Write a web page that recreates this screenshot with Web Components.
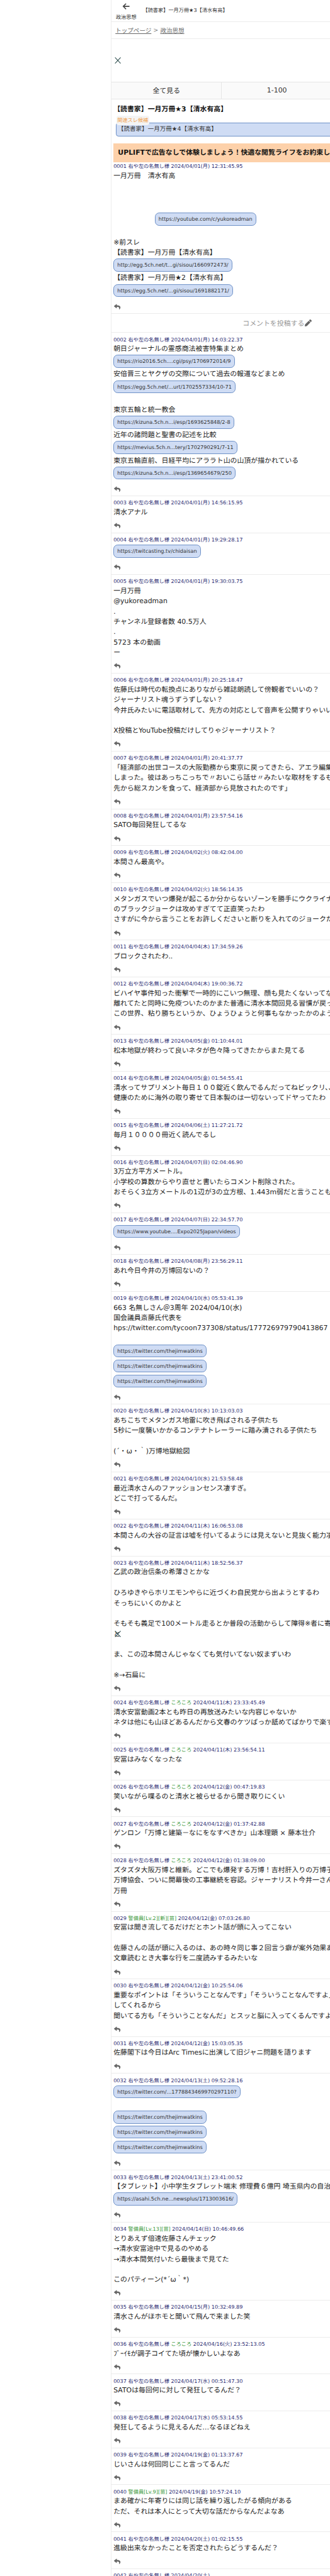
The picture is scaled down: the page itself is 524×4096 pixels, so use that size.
<!DOCTYPE html>
<html lang="ja">
<head>
<meta charset="utf-8">
<title>【読書家】一月万冊★3【清水有高】</title>
<style>
html,body{margin:0;padding:0;background:#fff;height:100%;overflow:hidden}
body{font-family:"DejaVu Sans","Noto Sans CJK JP",sans-serif;color:#222;text-rendering:geometricPrecision}
</style>
</head>
<body>
<bbs-app>
<site-header section="政治思想" title="【読書家】一月万冊★3【清水有高】"></site-header>
<bread-crumb></bread-crumb>
<ad-slot></ad-slot>
<page-tabs></page-tabs>
<thread-head title="【読書家】一月万冊★3【清水有高】" related="【読書家】一月万冊★4【清水有高】" banner="UPLIFTで広告なしで体験しましょう！快適な閲覧ライフをお約束します"></thread-head>

<bbs-comment first no="0001" date="2024/04/01(月) 12:31:45.95">
<c-line>一月万冊　清水有高</c-line><c-line></c-line><c-line></c-line><c-line></c-line>
<c-link offset>https://youtube.com/c/yukoreadman</c-link>
<c-line></c-line>
<c-line>※前スレ</c-line>
<c-line>【読書家】一月万冊【清水有高】</c-line>
<c-link>http://egg.5ch.net/t...gi/sisou/1660972473/</c-link>
<c-line>【読書家】一月万冊★2【清水有高】</c-line>
<c-link>https://egg.5ch.net/...gi/sisou/1691882171/</c-link>
</bbs-comment>
<post-row></post-row>

<bbs-comment no="0002" date="2024/04/01(月) 14:03:22.37">
<c-line>朝日ジャーナルの霊感商法被害特集まとめ</c-line>
<c-link>https://rio2016.5ch....cgi/psy/1706972014/9</c-link>
<c-line>安倍晋三とヤクザの交際について過去の報道などまとめ</c-line>
<c-link>https://egg.5ch.net/...urt/1702557334/10-71</c-link>
<c-line></c-line>
<c-line>東京五輪と統一教会</c-line>
<c-link>https://kizuna.5ch.n...i/esp/1693625848/2-8</c-link>
<c-line>近年の諸問題と聖書の記述を比較</c-line>
<c-link>https://mevius.5ch.n...tery/1702790291/7-11</c-link>
<c-line>東京五輪直前、日経平均にアララト山の山頂が描かれている</c-line>
<c-link>https://kizuna.5ch.n...i/esp/1369654679/250</c-link>
</bbs-comment>

<bbs-comment no="0003" date="2024/04/01(月) 14:56:15.95"><c-line>清水アナル</c-line></bbs-comment>
<bbs-comment no="0004" date="2024/04/01(月) 19:29:28.17"><c-link>https://twitcasting.tv/chidaisan</c-link></bbs-comment>
<bbs-comment no="0005" date="2024/04/01(月) 19:30:03.75">
<c-line>一月万冊</c-line><c-line>@yukoreadman</c-line><c-line>.</c-line><c-line>チャンネル登録者数 40.5万人</c-line><c-line>.</c-line><c-line>5723 本の動画</c-line><c-line>ー</c-line>
</bbs-comment>
<bbs-comment no="0006" date="2024/04/01(月) 20:25:18.47">
<c-line>佐藤氏は時代の転換点にありながら雑誌朗読して傍観者でいいの？</c-line>
<c-line>ジャーナリスト魂うずうずしない？</c-line>
<c-line>今井氏みたいに電話取材して、先方の対応として音声を公開すりゃいい</c-line>
<c-line></c-line>
<c-line>X投稿とYouTube投稿だけしてりゃジャーナリスト？</c-line>
</bbs-comment>
<bbs-comment no="0007" date="2024/04/01(月) 20:41:37.77">
<c-line>「経済部の出世コースの大阪勤務から東京に戻ってきたら、アエラ編集</c-line>
<c-line>しまった。彼はあっちこっちで〃おいこら話せ〃みたいな取材をするも</c-line>
<c-line>先から総スカンを食って、経済部から見放されたのです」</c-line>
</bbs-comment>
<bbs-comment no="0008" date="2024/04/01(月) 23:57:54.16"><c-line>SATO毎回発狂してるな</c-line></bbs-comment>
<bbs-comment no="0009" date="2024/04/02(火) 08:42:04.00"><c-line>本間さん最高や。</c-line></bbs-comment>
<bbs-comment no="0010" date="2024/04/02(火) 18:56:14.35">
<c-line>メタンガスでいつ爆発が起こるか分からないゾーンを勝手にウクライナ</c-line>
<c-line>のブラックジョークは攻めすぎてて正直笑ったわ</c-line>
<c-line>さすがに今から言うことをお許しくださいと断りを入れてのジョークだ</c-line>
</bbs-comment>
<bbs-comment no="0011" date="2024/04/04(木) 17:34:59.26"><c-line>ブロックされたわ..</c-line></bbs-comment>
<bbs-comment no="0012" date="2024/04/04(木) 19:00:36.72">
<c-line>ビハイヤ事件知った衝撃で一時的にこいつ無理、顔も見たくないってな</c-line>
<c-line>離れてたと同時に免疫ついたのかまた普通に清水本間回見る習慣が戻っ</c-line>
<c-line>この世界、粘り勝ちというか、ひょうひょうと何事もなかったかのよう</c-line>
</bbs-comment>
<bbs-comment no="0013" date="2024/04/05(金) 01:10:44.01"><c-line>松本地獄が終わって良いネタが色々降ってきたからまた見てる</c-line></bbs-comment>
<bbs-comment no="0014" date="2024/04/05(金) 01:54:55.41">
<c-line>清水ってサプリメント毎日１００錠近く飲んでるんだってねビックリ、、</c-line>
<c-line>健康のために海外の取り寄せて日本製のは一切ないってドヤってたわ</c-line>
</bbs-comment>
<bbs-comment no="0015" date="2024/04/06(土) 11:27:21.72"><c-line>毎月１００００冊近く読んでるし</c-line></bbs-comment>
<bbs-comment no="0016" date="2024/04/07(日) 02:04:46.90">
<c-line>3万立方平方メートル。</c-line>
<c-line>小学校の算数からやり直せと書いたらコメント削除された。</c-line>
<c-line>おそらく3立方メートルの1辺が3の立方根、1.443m弱だと言うことも</c-line>
</bbs-comment>
<bbs-comment no="0017" date="2024/04/07(日) 22:34:57.70"><c-link>https://www.youtube....Expo2025Japan/videos</c-link></bbs-comment>
<bbs-comment no="0018" date="2024/04/08(月) 23:56:29.11"><c-line>あれ今日今井の万博回ないの？</c-line></bbs-comment>
<bbs-comment no="0019" date="2024/04/10(水) 05:53:41.39">
<c-line>663 名無しさん＠3周年 2024/04/10(水)</c-line>
<c-line>国会議員斎藤氏代表を</c-line>
<c-line>hps://twitter.com/tycoon737308/status/177726979790413867</c-line>
<c-line></c-line>
<c-link>https://twitter.com/thejimwatkins</c-link>
<c-link>https://twitter.com/thejimwatkins</c-link>
<c-link>https://twitter.com/thejimwatkins</c-link>
</bbs-comment>
<bbs-comment no="0020" date="2024/04/10(水) 10:13:03.03">
<c-line>あちこちでメタンガス地雷に吹き飛ばされる子供たち</c-line>
<c-line>5秒に一度襲いかかるコンテナトレーラーに踏み潰される子供たち</c-line>
<c-line></c-line>
<c-line>(´・ω・｀)万博地獄絵図</c-line>
</bbs-comment>
<bbs-comment no="0021" date="2024/04/10(水) 21:53:58.48">
<c-line>最近清水さんのファッションセンス凄すぎ。</c-line>
<c-line>どこで打ってるんだ。</c-line>
</bbs-comment>
<bbs-comment no="0022" date="2024/04/11(木) 16:06:53.08"><c-line>本間さんの大谷の証言は嘘を付いてるようには見えないと見抜く能力凄</c-line></bbs-comment>
<bbs-comment no="0023" date="2024/04/11(木) 18:52:56.37">
<c-line>乙武の政治信条の希薄さとかな</c-line>
<c-line></c-line>
<c-line>ひろゆきやらホリエモンやらに近づくわ自民党から出ようとするわ</c-line>
<c-line>そっちにいくのかよと</c-line>
<c-line></c-line>
<c-line>そもそも義足で100メートル走るとか普段の活動からして障得※者に寄</c-line>
<c-line><close-x over></close-x>と</c-line>
<c-line></c-line>
<c-line>ま、この辺本間さんじゃなくても気付いてない奴まずいわ</c-line>
<c-line></c-line>
<c-line>※→石扁に</c-line>
</bbs-comment>
<bbs-comment no="0024" nick="ころころ" date="2024/04/11(木) 23:33:45.49">
<c-line>清水安富動画2本とも昨日の再放送みたいな内容じゃないか</c-line>
<c-line>ネタは他にも山ほどあるんだから文春のケツばっか舐めてばかりで楽す</c-line>
</bbs-comment>
<bbs-comment no="0025" nick="ころころ" date="2024/04/11(木) 23:56:54.11"><c-line>安冨はみなくなったな</c-line></bbs-comment>
<bbs-comment no="0026" nick="ころころ" date="2024/04/12(金) 00:47:19.83"><c-line>笑いながら喋るのと清水と被らせるから聞き取りにくい</c-line></bbs-comment>
<bbs-comment no="0027" nick="ころころ" date="2024/04/12(金) 01:37:42.88"><c-line>ゲンロン「万博と建築－なにをなすべきか」山本理顕 × 藤本壮介</c-line></bbs-comment>
<bbs-comment no="0028" nick="ころころ" date="2024/04/12(金) 01:38:09.00">
<c-line>ズタズタ大阪万博と維新。どこでも爆発する万博！吉村肝入りの万博子</c-line>
<c-line>万博協会、ついに開幕後の工事継続を容認。ジャーナリスト今井一さん</c-line>
<c-line>万冊</c-line>
</bbs-comment>
<bbs-comment no="0029" guard="警備員[Lv.2][新][苗]" date="2024/04/12(金) 07:03:26.80">
<c-line>安冨は聞き流してるだけだとホント話が頭に入ってこない</c-line>
<c-line></c-line>
<c-line>佐藤さんの話が頭に入るのは、あの時々同じ事２回言う癖が案外効果あ</c-line>
<c-line>文章読むとき大事な行を二度読みするみたいな</c-line>
</bbs-comment>
<bbs-comment no="0030" date="2024/04/12(金) 10:25:54.06">
<c-line>重要なポイントは「そういうことなんです」「そういうことなんですよ」</c-line>
<c-line>してくれるから</c-line>
<c-line>聞いてる方も「そういうことなんだ」とスッと脳に入ってくるんですよ</c-line>
</bbs-comment>
<bbs-comment no="0031" date="2024/04/12(金) 15:03:05.35"><c-line>佐藤閣下は今日はArc Timesに出演して旧ジャニ問題を語ります</c-line></bbs-comment>
<bbs-comment no="0032" date="2024/04/13(土) 09:52:28.16">
<c-link>https://twitter.com/...1778843469970297110?</c-link>
<c-line></c-line>
<c-link>https://twitter.com/thejimwatkins</c-link>
<c-link>https://twitter.com/thejimwatkins</c-link>
<c-link>https://twitter.com/thejimwatkins</c-link>
</bbs-comment>
<bbs-comment no="0033" date="2024/04/13(土) 23:41:00.52">
<c-line>【タブレット】小中学生タブレット端末 修理費６億円 埼玉県内の自治</c-line>
<c-link>https://asahi.5ch.ne...newsplus/1713003616/</c-link>
</bbs-comment>
<bbs-comment no="0034" guard="警備員[Lv.13][苗]" date="2024/04/14(日) 10:46:49.66">
<c-line>とりあえず倍速佐藤さんチェック</c-line>
<c-line>→清水安富途中で見るのやめる</c-line>
<c-line>→清水本間気付いたら最後まで見てた</c-line>
<c-line></c-line>
<c-line>このパティーン(*´ω｀*)</c-line>
</bbs-comment>
<bbs-comment no="0035" date="2024/04/15(月) 10:32:49.89"><c-line>清水さんがほホモと聞いて飛んで来ました笑</c-line></bbs-comment>
<bbs-comment no="0036" nick="ころころ" date="2024/04/16(火) 23:52:13.05"><c-line>ﾌﾞｰｲﾓが調子コイてた頃が懐かしいよなあ</c-line></bbs-comment>
<bbs-comment no="0037" date="2024/04/17(水) 00:51:47.30"><c-line>SATOは毎回何に対して発狂してるんだ？</c-line></bbs-comment>
<bbs-comment no="0038" date="2024/04/17(水) 05:53:14.55"><c-line>発狂してるように見えるんだ…なるほどねえ</c-line></bbs-comment>
<bbs-comment no="0039" date="2024/04/19(金) 01:13:37.67"><c-line>じいさんは何回同じこと言ってるんだ</c-line></bbs-comment>
<bbs-comment no="0040" guard="警備員[Lv.9][苗]" date="2024/04/19(金) 10:57:24.10">
<c-line>まあ確かに年寄りには同じ話を繰り返したがる傾向がある</c-line>
<c-line>ただ、それは本人にとって大切な話だからなんだよなあ</c-line>
</bbs-comment>
<bbs-comment no="0041" date="2024/04/20(土) 01:02:15.55"><c-line>進級出来なかったことを否定されたらどうするんだ？</c-line></bbs-comment>
<bbs-comment no="0042" date="2024/04/20(土)"></bbs-comment>
</bbs-app>

<script>
const S = 0.6825;
const u = n => (n * S).toFixed(3) + 'px';
const NAVY = '#2a2a72', GREEN = '#3d9a3d', RULE = '#ececec';

const ICONS = {
  reply: 'M8.309 189.836L184.313 37.851C199.719 24.546 224 35.347 224 56.015v80.053c160.629 1.839 288 34.032 288 186.258 0 61.441-39.581 122.309-83.333 154.132-13.653 9.931-33.111-2.533-28.077-18.631 45.344-145.012-21.507-183.51-176.59-185.742V360c0 20.7-24.3 31.453-39.687 18.164l-176.004-152c-11.071-9.562-11.086-26.753 0-36.328z',
  pen: 'M497.9 142.1l-46.1 46.1c-4.7 4.7-12.3 4.7-17 0l-111-111c-4.7-4.7-4.7-12.3 0-17l46.1-46.1c18.7-18.7 49.1-18.7 67.9 0l60.1 60.1c18.8 18.7 18.8 49.1 0 67.9zM284.2 99.8L21.6 362.4.4 483.9c-2.9 16.4 11.4 30.6 27.8 27.8l121.5-21.3 262.6-262.6c4.7-4.7 4.7-12.3 0-17l-111-111c-4.8-4.7-12.4-4.7-17.1 0z'
};

function define(tag, html) {
  customElements.define(tag, class extends HTMLElement {
    connectedCallback() {
      if (this.shadowRoot) return;
      const root = this.attachShadow({ mode: 'open' });
      root.innerHTML = typeof html === 'function' ? html(this) : html;
    }
  });
}

define('bbs-app', `<style>
:host{display:block;width:100%;height:100vh;overflow:hidden}
main{display:block;margin-left:${u(258)};width:${u(768)};min-height:100%;border-left:1px solid ${RULE};box-sizing:border-box}
</style><main><slot></slot></main>`);

define('site-header', h => `<style>
:host{display:flex;height:${u(50)};border-bottom:1px solid ${RULE};box-sizing:content-box;color:#333}
.back{display:flex;flex-direction:column;align-items:center;margin-left:${u(10)};width:${u(48)}}
svg{display:block;margin-top:${u(7)};width:${u(18)};height:${u(15)}}
.sec{font-size:${u(12)};line-height:${u(18)};margin-top:${u(9)};white-space:nowrap}
.title{font-size:${u(12)};line-height:${u(18)};margin-left:${u(14.5)};margin-top:${u(15)};white-space:nowrap}
</style>
<div class="back"><svg viewBox="0 0 18 15"><path d="M17 7.5H2.5M9 1L2.5 7.5L9 14" fill="none" stroke="#444" stroke-width="2.3"/></svg><span class="sec">${h.getAttribute('section')}</span></div>
<div class="title">${h.getAttribute('title')}</div>`);

define('bread-crumb', `<style>
:host{display:flex;align-items:center;height:${u(38)};padding-left:${u(9)};border-bottom:1px solid ${RULE};font-size:${u(14)};color:#777;white-space:pre}
a{color:#666;text-decoration:underline}
</style><a>トップページ</a><span> &gt; </span><a>政治思想</a>`);

define('close-x', `<style>
:host{display:block;width:${u(15)};height:${u(15)}}
:host([over]){position:absolute;left:${u(3)};top:${u(3)}}
svg{display:block;width:100%;height:100%}
</style><svg viewBox="0 0 15 15"><path d="M1 .5L14 14.5M14 .5L1 14.5" stroke="#2f4f4f" stroke-width="1.5" fill="none"/></svg>`);

define('ad-slot', `<style>
:host{display:flex;align-items:center;height:${u(99)};padding-left:${u(7)};box-sizing:border-box}
</style><close-x></close-x>`);

define('page-tabs', `<style>
:host{display:grid;grid-template-columns:repeat(3,${u(257)});height:${u(38)};background:#fafafa;border-top:1px solid #e6e6e6;border-bottom:1px solid #e6e6e6;font-size:${u(16)};color:#333}
span{display:flex;align-items:center;justify-content:center;border-right:1px solid #e6e6e6}
</style><span>全て見る</span><span>1-100</span><span></span>`);

define('thread-head', h => `<style>
:host{display:block;padding-top:${u(12.5)}}
h1{margin:0 0 0 ${u(4.5)};font-size:${u(16)};line-height:${u(24)};font-weight:700;color:#111;white-space:nowrap}
.rel{position:relative;margin:${u(18.5)} 0 0 ${u(10)};width:${u(758)};height:${u(32)};box-sizing:border-box;background:#cfdcf4;border:1px solid #6f92c8;border-radius:${u(6)};font-size:${u(14)};line-height:${u(30)};padding-left:${u(3)};color:#333;white-space:nowrap}
.tag{position:absolute;left:0;top:${u(-17)};padding:0 ${u(2)};background:#f4f4f4;border-radius:${u(5)};font-size:${u(12)};line-height:${u(21)};color:#f0a24e}
.ad{margin:${u(16)} 0 0 ${u(4.5)};height:${u(44)};background:#fdd1aa;padding-left:${u(10.5)};font-size:${u(16)};font-weight:700;line-height:${u(44)};color:#111;white-space:nowrap;overflow:hidden}
</style>
<h1>${h.getAttribute('title')}</h1>
<div class="rel"><span class="tag">関連スレ候補</span>${h.getAttribute('related')}</div>
<div class="ad">${h.getAttribute('banner')}</div>`);

define('bbs-comment', h => {
  const no = h.getAttribute('no'), date = h.getAttribute('date');
  const nick = h.getAttribute('nick'), guard = h.getAttribute('guard');
  const who = guard ? `<b>${guard}</b>` : `右や左の名無し様${nick ? ` <b>${nick}</b>` : ''}`;
  return `<style>
:host{display:block;border-top:1px solid ${RULE};padding:${u(6.035)} 0 0 ${u(4.5)}}
:host([first]){border-top:0;padding-top:${u(1)}}
.meta{font-size:${u(12)};line-height:${u(18)};margin-bottom:${u(2)};color:${NAVY};white-space:nowrap}
b{font-weight:400;color:${GREEN}}
.reply{height:${u(34.5)};padding:${u(11.5)} 0 0 ${u(1.7)};box-sizing:border-box}
svg{display:block;width:${u(15)};height:${u(14)};fill:#666}
</style>
<div class="meta">${no} ${who} ${date}</div>
<slot></slot>
<div class="reply"><svg viewBox="0 0 512 512" preserveAspectRatio="none"><path d="${ICONS.reply}"/></svg></div>`;
});

define('c-line', `<style>
:host{display:block;position:relative;height:${u(24)};font-size:${u(16)};line-height:${u(24)};color:#222;white-space:pre}
</style><slot></slot>`);

define('c-link', `<style>
:host{display:block;padding:${u(1)} 0 ${u(4)}}
:host([offset]){margin-left:${u(96)}}
div{display:inline-block;vertical-align:top;height:${u(30)};box-sizing:border-box;padding:0 ${u(7.5)};background:#cfdcf4;border:1px solid #6f92c8;border-radius:${u(10)};font-size:${u(12)};line-height:${u(27.5)};color:#333;white-space:nowrap}
</style><div><slot></slot></div>`);

define('post-row', `<style>
:host{display:flex;align-items:center;height:${u(42.9)};border-top:1px solid ${RULE};padding-left:${u(305)};font-size:${u(16)};color:#999;white-space:nowrap}
svg{display:block;width:${u(16)};height:${u(16)};fill:#666;margin-left:${u(1)}}
</style>コメントを投稿する<svg viewBox="0 0 512 512"><path d="${ICONS.pen}"/></svg>`);
</script>
</body>
</html>
